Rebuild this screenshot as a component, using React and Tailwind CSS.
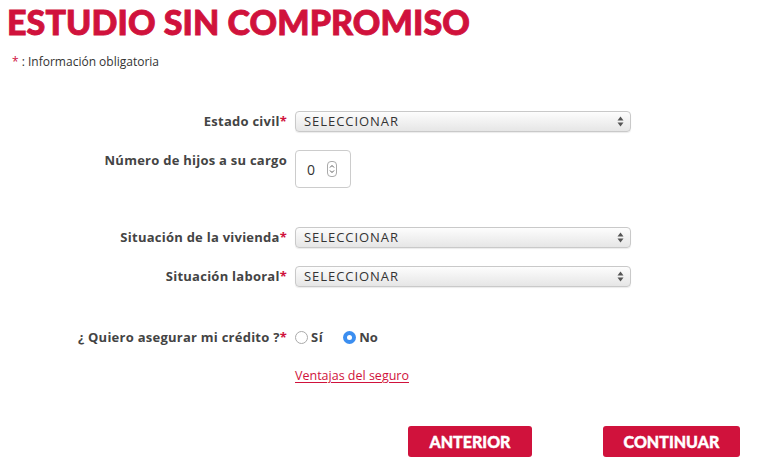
import React from "react";

const font = { fontFamily: "'Open Sans', Lato, sans-serif" };

function Req() {
  return <span className="text-[#d0123c]">*</span>;
}

function Row({ label, required, children, className = "" }) {
  return (
    <div className={"flex items-start " + className}>
      <div className="w-[287px] shrink-0 text-right text-[13px] font-bold leading-[21px] tracking-[0.25px] text-[#444]">
        {label}
        {required && <Req />}
      </div>
      <div className="ml-2">{children}</div>
    </div>
  );
}

function FakeSelect() {
  return (
    <div className="flex h-[21px] w-[336px] items-center justify-between rounded-[4px] border border-[#c9c9c9] bg-gradient-to-b from-[#fdfdfd] to-[#e6e6e6] pl-2 pr-[6px] shadow-[0_1px_1px_rgba(0,0,0,0.08)]">
      <span className="text-[13px] tracking-[0.95px] text-[#333]">SELECCIONAR</span>
      <svg width="7" height="11" viewBox="0 0 7 11">
        <path d="M3.5 0.5 L6.5 4.5 H0.5 Z" fill="#555" />
        <path d="M3.5 10.5 L6.5 6.5 H0.5 Z" fill="#555" />
      </svg>
    </div>
  );
}

function NumberBox() {
  return (
    <div className="flex h-[38px] w-[56px] items-center rounded-[4px] border border-[#ccc] bg-white pl-[11px]">
      <span className="text-[14px] text-[#333]">0</span>
      <span className="ml-[12px] flex h-[16px] w-[10px] items-center justify-center rounded-[4px] border border-[#aaa]">
        <svg width="6" height="10" viewBox="0 0 6 10">
          <path d="M1 3.5 L3 1.5 L5 3.5 M1 6.5 L3 8.5 L5 6.5" fill="none" stroke="#444" strokeWidth="0.9" />
        </svg>
      </span>
    </div>
  );
}

export default function App() {
  return (
    <div className="h-[476px] w-[776px] bg-white" style={font}>
      <h1
        className="pl-[7px] pt-[3px] text-[34px] font-black leading-[38px] tracking-[0.1px] text-[#d0123c] [-webkit-text-stroke:0.9px_#d0123c]"
        style={{ fontFamily: "Lato, sans-serif" }}
      >
        ESTUDIO SIN COMPROMISO
      </h1>
      <p className="mt-[12px] pl-[12px] text-[12px] text-[#333]">
        <Req /> : Información obligatoria
      </p>

      <div className="mt-[40px]">
        <Row label="Estado civil" required>
          <FakeSelect />
        </Row>
        <Row label="Número de hijos a su cargo" className="mt-[18px]">
          <NumberBox />
        </Row>
        <Row label="Situación de la vivienda" required className="mt-[39px]">
          <FakeSelect />
        </Row>
        <Row label="Situación laboral" required className="mt-[18px]">
          <FakeSelect />
        </Row>
        <Row label="¿ Quiero asegurar mi crédito ?" required className="mt-[40px]">
          <div className="flex h-[21px] items-center text-[13px] font-bold text-[#444]">
            <span className="h-[13px] w-[13px] rounded-full border border-[#aaa] bg-white" />
            <span className="ml-[3px] tracking-[0.5px]">Sí</span>
            <span className="ml-[20px] flex h-[13px] w-[13px] items-center justify-center rounded-full bg-[#3b8ef0]">
              <span className="h-[5px] w-[5px] rounded-full bg-white" />
            </span>
            <span className="ml-[3px]">No</span>
          </div>
        </Row>
        <div className="mt-[14px] pl-[295px]">
          <a href="#" className="text-[12.5px] text-[#d0123c] underline underline-offset-2">
            Ventajas del seguro
          </a>
        </div>
      </div>

      <div className="mt-[40px] flex pl-[408px]">
        <button
          className="h-[31px] w-[124px] rounded-[3px] bg-[#d0123c] text-[16px] font-black text-white [-webkit-text-stroke:0.4px_#fff]"
          style={{ fontFamily: "Lato, sans-serif" }}
        >
          ANTERIOR
        </button>
        <button
          className="ml-[71px] h-[31px] w-[137px] rounded-[3px] bg-[#d0123c] text-[16px] font-black text-white [-webkit-text-stroke:0.4px_#fff]"
          style={{ fontFamily: "Lato, sans-serif" }}
        >
          CONTINUAR
        </button>
      </div>
    </div>
  );
}
